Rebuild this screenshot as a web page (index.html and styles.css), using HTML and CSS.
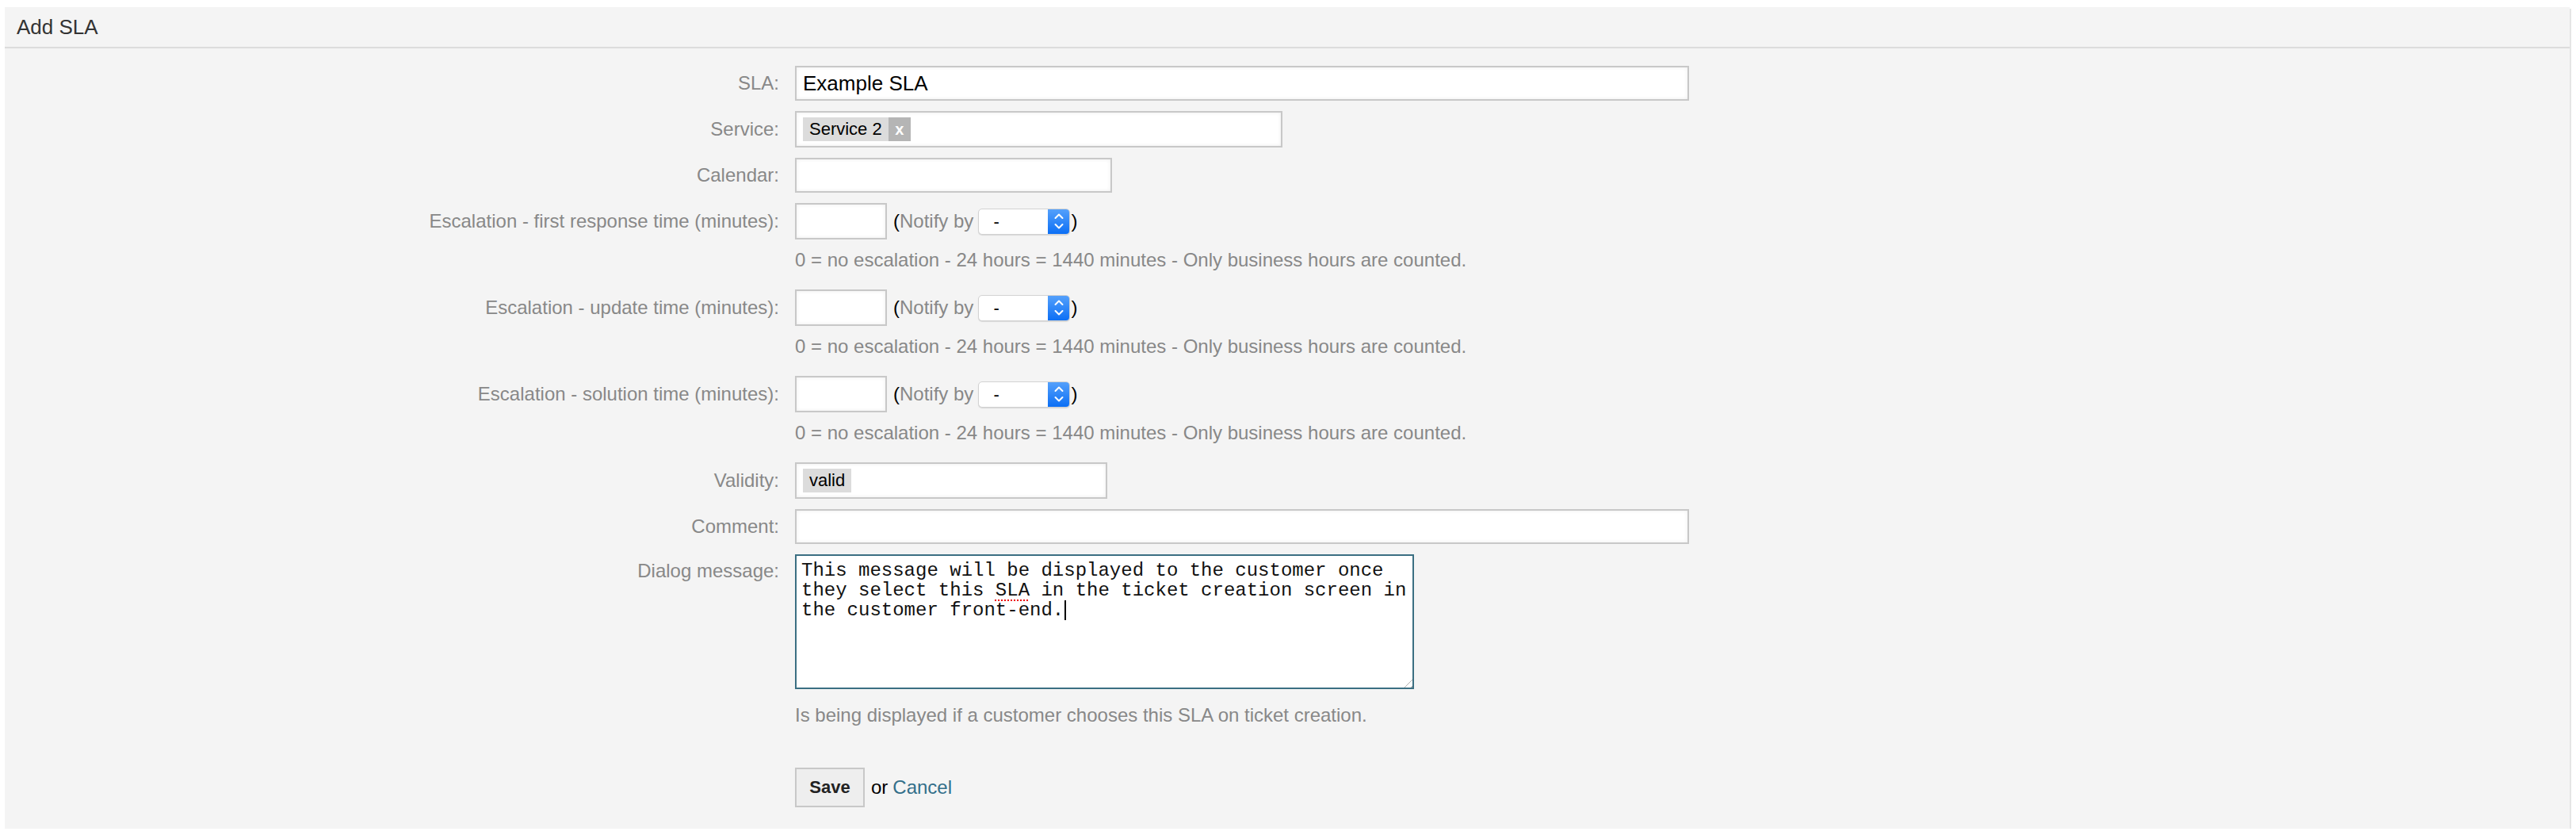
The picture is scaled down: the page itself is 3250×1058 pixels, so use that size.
FILE: index.html
```html
<!DOCTYPE html>
<html>
<head>
<meta charset="utf-8">
<title>Add SLA</title>
<link rel="stylesheet" href="styles.css">
</head>
<body>
<div class="panel">
  <div class="header"><h2>Add SLA</h2></div>
  <div class="content">
    <div class="form">
      <label class="lbl">SLA:</label>
      <div class="field"><input class="input w-long" type="text" value="Example SLA"></div>

      <label class="lbl tall">Service:</label>
      <div class="field"><div class="input box w-service"><span class="tag">Service 2<span class="tag-x">x</span></span></div></div>

      <label class="lbl">Calendar:</label>
      <div class="field"><input class="input w-cal" type="text" value=""></div>

      <label class="lbl tall">Escalation - first response time (minutes):</label>
      <div class="field">
        <div class="esc">
          <input class="input small" type="text" value="">
          <span class="notify"><span class="paren">(</span>Notify by</span>
          <span class="select"><span class="sel-val">-</span><span class="sel-btn"><svg width="14" height="24" viewBox="0 0 14 24"><path d="M2.5 8 L7 3.5 L11.5 8" fill="none" stroke="#fff" stroke-width="2" stroke-linecap="round" stroke-linejoin="round"/><path d="M2.5 16 L7 20.5 L11.5 16" fill="none" stroke="#fff" stroke-width="2" stroke-linecap="round" stroke-linejoin="round"/></svg></span></span><span class="paren">)</span>
        </div>
        <p class="help">0 = no escalation - 24 hours = 1440 minutes - Only business hours are counted.</p>
      </div>

      <label class="lbl tall">Escalation - update time (minutes):</label>
      <div class="field">
        <div class="esc">
          <input class="input small" type="text" value="">
          <span class="notify"><span class="paren">(</span>Notify by</span>
          <span class="select"><span class="sel-val">-</span><span class="sel-btn"><svg width="14" height="24" viewBox="0 0 14 24"><path d="M2.5 8 L7 3.5 L11.5 8" fill="none" stroke="#fff" stroke-width="2" stroke-linecap="round" stroke-linejoin="round"/><path d="M2.5 16 L7 20.5 L11.5 16" fill="none" stroke="#fff" stroke-width="2" stroke-linecap="round" stroke-linejoin="round"/></svg></span></span><span class="paren">)</span>
        </div>
        <p class="help">0 = no escalation - 24 hours = 1440 minutes - Only business hours are counted.</p>
      </div>

      <label class="lbl tall">Escalation - solution time (minutes):</label>
      <div class="field">
        <div class="esc">
          <input class="input small" type="text" value="">
          <span class="notify"><span class="paren">(</span>Notify by</span>
          <span class="select"><span class="sel-val">-</span><span class="sel-btn"><svg width="14" height="24" viewBox="0 0 14 24"><path d="M2.5 8 L7 3.5 L11.5 8" fill="none" stroke="#fff" stroke-width="2" stroke-linecap="round" stroke-linejoin="round"/><path d="M2.5 16 L7 20.5 L11.5 16" fill="none" stroke="#fff" stroke-width="2" stroke-linecap="round" stroke-linejoin="round"/></svg></span></span><span class="paren">)</span>
        </div>
        <p class="help">0 = no escalation - 24 hours = 1440 minutes - Only business hours are counted.</p>
      </div>

      <label class="lbl tall">Validity:</label>
      <div class="field"><div class="input box w-valid"><span class="tag">valid</span></div></div>

      <label class="lbl">Comment:</label>
      <div class="field"><input class="input w-long" type="text" value=""></div>

      <label class="lbl dlg">Dialog message:</label>
      <div class="field">
        <div class="textarea">This message will be displayed to the customer once<br>they select this <span class="spell">SLA</span> in the ticket creation screen in<br>the customer front-end.<span class="caret"></span><span class="grip"></span></div>
        <p class="help help-dlg">Is being displayed if a customer chooses this SLA on ticket creation.</p>
      </div>

      <div class="spacer"></div>
      <div class="field actions">
        <button class="btn" type="button">Save</button>
        <span class="or">or</span>
        <a class="cancel" href="#">Cancel</a>
      </div>
    </div>
  </div>
</div>
</body>
</html>
```
FILE: styles.css
```css
html, body {
  margin: 0;
  padding: 0;
  background: #fff;
}

body {
  font-family: "Liberation Sans", Arial, Helvetica, sans-serif;
  color: #000;
}

.panel {
  margin: 9px 8px 0 6px;
  background: #f4f4f4;
  box-shadow: 2px 2px 0 #e5e5e5;
}

.header {
  height: 50px;
  border-bottom: 2px solid #dcdcdc;
  padding-left: 15px;
}

.header h2 {
  margin: 0;
  font-size: 26px;
  line-height: 50px;
  font-weight: normal;
  color: #333;
}

.content {
  padding: 22px 0 27px;
}

.form {
  display: grid;
  grid-template-columns: 977px 1fr;
  column-gap: 20px;
  row-gap: 13px;
  align-items: start;
}

.lbl {
  text-align: right;
  font-size: 24px;
  line-height: 44px;
  color: #888;
}

.lbl.tall {
  line-height: 46px;
}

.lbl.dlg {
  line-height: 42px;
}

.field {
  min-width: 0;
}

.input {
  display: block;
  box-sizing: border-box;
  height: 44px;
  margin: 0;
  border: 2px solid #c8c8c8;
  background: #fff;
  box-shadow: inset 0 0 5px rgba(0, 0, 0, 0.08);
  font-family: "Liberation Sans", Arial, sans-serif;
  font-size: 26px;
  color: #000;
  padding: 0 8px;
  outline: none;
}

.box {
  height: 46px;
  display: flex;
  align-items: center;
}

.w-long { width: 1128px; }
.w-service { width: 615px; }
.w-cal { width: 400px; }
.w-valid { width: 394px; }

.input.small {
  width: 116px;
  height: 46px;
}

.tag {
  display: inline-flex;
  align-items: center;
  height: 30px;
  background: #dcdcdc;
  padding-left: 8px;
  font-size: 22px;
  color: #000;
}

.w-valid .tag {
  padding: 0 8px;
}

.tag-x {
  display: inline-flex;
  align-items: center;
  justify-content: center;
  margin-left: 8px;
  width: 28px;
  height: 30px;
  background: #b5b5b5;
  color: #fff;
  font-weight: bold;
  font-size: 20px;
}

.esc {
  display: flex;
  align-items: center;
  height: 46px;
}

.notify {
  margin-left: 8px;
  font-size: 24px;
  color: #888;
}

.paren {
  color: #000;
}

.select {
  display: inline-flex;
  box-sizing: border-box;
  margin-left: 6px;
  width: 116px;
  height: 33px;
  border: 1px solid #d2d2d2;
  border-radius: 5px;
  background: #fff;
  box-shadow: 0 1px 1px rgba(0, 0, 0, 0.12);
  overflow: hidden;
}

.sel-val {
  flex: 1;
  padding-left: 18px;
  font-size: 22px;
  line-height: 31px;
  color: #000;
}

.sel-btn {
  width: 27px;
  display: flex;
  align-items: center;
  justify-content: center;
  background: linear-gradient(#54a0fb, #0c6ff5);
}

.esc > .paren {
  font-size: 24px;
  margin-left: 1px;
}

.help {
  margin: 13px 0 11px;
  font-size: 24px;
  line-height: 26px;
  color: #888;
}

.help.help-dlg {
  margin: 20px 0 40px;
}

.textarea {
  position: relative;
  box-sizing: border-box;
  width: 781px;
  height: 170px;
  border: 2px solid #3b6f82;
  background: #fff;
  padding: 6px 6px;
  font-family: "Liberation Mono", "Courier New", monospace;
  font-size: 24px;
  line-height: 25px;
  color: #111;
  white-space: nowrap;
}

.spell {
  text-decoration: underline dotted #e00;
  text-decoration-thickness: 2px;
  text-underline-offset: 5px;
}

.caret {
  display: inline-block;
  width: 2px;
  height: 25px;
  background: #000;
  vertical-align: top;
  margin-left: 1px;
}

.grip {
  position: absolute;
  right: 0;
  bottom: 0;
  width: 16px;
  height: 16px;
  background: repeating-linear-gradient(135deg, transparent 0 3px, #b0b0b0 3px 4px, transparent 4px 6px);
  clip-path: polygon(100% 0, 100% 100%, 0 100%);
}

.actions {
  display: flex;
  align-items: center;
  height: 50px;
}

.btn {
  box-sizing: border-box;
  width: 88px;
  height: 50px;
  border: 2px solid #c8c8c8;
  background: #eee;
  font-family: "Liberation Sans", Arial, sans-serif;
  font-weight: bold;
  font-size: 22px;
  color: #222;
  padding: 0;
}

.or {
  margin-left: 8px;
  font-size: 24px;
  color: #000;
}

.cancel {
  margin-left: 6px;
  font-size: 24px;
  color: #336f8a;
  text-decoration: none;
}
```
